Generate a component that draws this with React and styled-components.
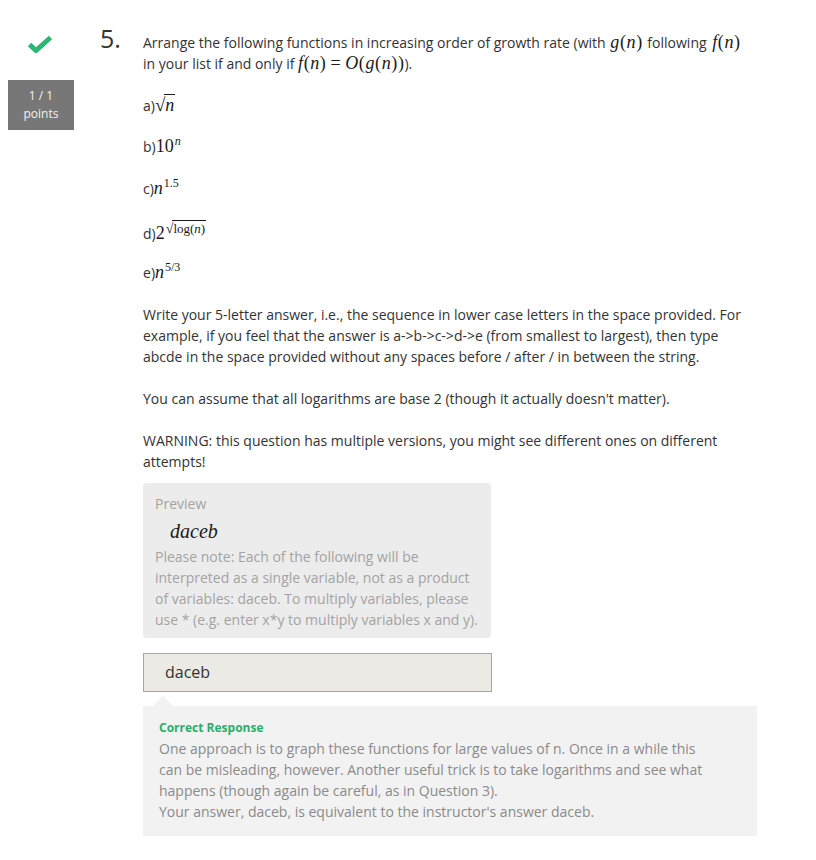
import React from 'react';
import styled, { createGlobalStyle } from 'styled-components';

const Global = createGlobalStyle`
  html, body { margin: 0; padding: 0; background: #fff; }
  body { font-family: "Open Sans", sans-serif; color: #333; -webkit-font-smoothing: antialiased; }
`;

const Page = styled.div`
  width: 816px;
  min-height: 860px;
  box-sizing: border-box;
  padding-top: 32px;
  display: flex;
  align-items: flex-start;
`;

const Side = styled.div`
  margin-left: 8px;
  width: 66px;
  display: flex;
  flex-direction: column;
  align-items: center;
`;

const Check = styled.svg`
  margin-top: 3px;
  width: 26px;
  height: 18px;
  margin-right: 2px;
`;

const Points = styled.div`
  margin-top: 27px;
  width: 66px;
  height: 50px;
  box-sizing: border-box;
  padding-top: 7px;
  background: #777;
  color: #f2f2f2;
  font-size: 12px;
  line-height: 18px;
  text-align: center;
`;

const Num = styled.div`
  width: 69px;
  box-sizing: border-box;
  padding-left: 26px;
  margin-top: -4px;
  font-size: 25px;
  line-height: 21px;
  color: #333;
  font-weight: 400;
`;

const Content = styled.div`
  width: 614px;
  font-size: 14px;
  line-height: 21px;
  color: #333;
`;

const P = styled.p`
  margin: 0 0 ${p => p.$mb ?? 21}px;
`;

const ItemRow = styled.div`
  height: 21px;
  line-height: 21px;
  margin-bottom: 21px;
  white-space: nowrap;
`;

const Math = styled.span`
  font-family: "Liberation Serif", "DejaVu Serif", serif;
  font-size: ${p => p.$size || 18}px;
  letter-spacing: ${p => p.$ls ?? 0}px;
  margin: 0 ${p => p.$mx ?? 0}px;
  color: #1a1a1a;
  white-space: nowrap;
  line-height: 0;
`;

const V = styled.i`
  font-style: italic;
`;

const Op = styled.span`
  margin: 0 ${p => p.$gap ?? 4}px;
`;

const Sup = styled.sup`
  font-size: ${p => p.$size || 12}px;
  line-height: 0;
  vertical-align: ${p => p.$raise || 7}px;
  margin-left: 1px;
`;

const Radical = styled.span`
  font-size: ${p => p.$size || 19}px;
  margin-right: -1px;
`;

const Radicand = styled.span`
  display: inline-block;
  border-top: 1px solid #1a1a1a;
  line-height: 1;
  padding: 1px 1px 0 1px;
`;

const PreviewBox = styled.div`
  width: 348px;
  box-sizing: border-box;
  margin-top: -10px;
  padding: 10px 12px 8px;
  background: #ececec;
  border-radius: 4px;
  color: #a3a3a3;
  font-size: 14px;
  line-height: 21px;
`;

const PreviewMath = styled.div`
  font-family: "Liberation Serif", "DejaVu Serif", serif;
  font-style: italic;
  font-size: 20px;
  line-height: 29px;
  padding-top: 3px;
  margin-left: 15px;
  color: #1a1a1a;
`;

const Input = styled.div`
  margin-top: 15px;
  width: 349px;
  height: 39px;
  box-sizing: border-box;
  border: 1px solid #a6a6a6;
  background: #ebeae4;
  padding-left: 21px;
  display: flex;
  align-items: center;
  font-size: 16px;
  color: #333;
`;

const Feedback = styled.div`
  position: relative;
  margin-top: 14px;
  width: 614px;
  box-sizing: border-box;
  padding: 11px 16px 14px;
  background: #f2f2f2;
  color: #8a8a8a;
  font-size: 14px;
  line-height: 21px;

  &::before {
    content: "";
    position: absolute;
    top: -10px;
    left: 10px;
    border-left: 10px solid transparent;
    border-right: 10px solid transparent;
    border-bottom: 10px solid #f2f2f2;
  }
`;

const FeedbackTitle = styled.div`
  font-size: 12px;
  font-weight: 700;
  color: #2aae6c;
`;

const Item = ({ label, children }) => (
  <ItemRow>
    {label}){children}
  </ItemRow>
);

export default function App() {
  return (
    <>
      <Global />
      <Page>
        <Side>
          <Check viewBox="0 0 26 18">
            <path d="M2.5 9.5 L9 15.5 L23.5 2.5" fill="none" stroke="#2bb673" strokeWidth="5" strokeLinejoin="miter" strokeLinecap="butt" />
          </Check>
          <Points>
            1 / 1
            <br />
            points
          </Points>
        </Side>
        <Num>5.</Num>
        <Content>
          <P $mb={20}>
            Arrange the following functions in increasing order of growth rate (with{' '}
            <Math $ls={0.6} $mx={1}><V>g</V>(<V>n</V>)</Math> following{' '}
            <Math $ls={0.6} $mx={2}><V>f</V>(<V>n</V>)</Math> in your list if and only if{' '}
            <Math $ls={0.6}>
              <V>f</V>(<V>n</V>)<Op>=</Op><V>O</V>(<V>g</V>(<V>n</V>))
            </Math>
            ).
          </P>
          <Item label="a">
            <Math>
              <Radical>√</Radical>
              <Radicand><V>n</V></Radicand>
            </Math>
          </Item>
          <Item label="b">
            <Math>
              10<Sup><V>n</V></Sup>
            </Math>
          </Item>
          <Item label="c">
            <Math>
              <V>n</V><Sup>1.5</Sup>
            </Math>
          </Item>
          <Item label="d">
            <Math>
              2<Sup $raise={6} $size={13}>
                <Radical $size={14}>√</Radical>
                <Radicand>log(<V>n</V>)</Radicand>
              </Sup>
            </Math>
          </Item>
          <Item label="e">
            <Math>
              <V>n</V><Sup>5/3</Sup>
            </Math>
          </Item>
          <P>
            Write your 5-letter answer, i.e., the sequence in lower case letters in the space provided. For
            example, if you feel that the answer is a-&gt;b-&gt;c-&gt;d-&gt;e (from smallest to largest), then type
            abcde in the space provided without any spaces before / after / in between the string.
          </P>
          <P>You can assume that all logarithms are base 2 (though it actually doesn't matter).</P>
          <P>
            WARNING: this question has multiple versions, you might see different ones on different
            attempts!
          </P>
          <PreviewBox>
            Preview
            <PreviewMath>daceb</PreviewMath>
            Please note: Each of the following will be interpreted as a single variable, not as a product
            of variables: daceb. To multiply variables, please use * (e.g. enter x*y to multiply variables x and y).
          </PreviewBox>
          <Input>daceb</Input>
          <Feedback>
            <FeedbackTitle>Correct Response</FeedbackTitle>
            One approach is to graph these functions for large values of n. Once in a while this
            <br />
            can be misleading, however. Another useful trick is to take logarithms and see what
            <br />
            happens (though again be careful, as in Question 3).
            <br />
            Your answer, daceb, is equivalent to the instructor's answer daceb.
          </Feedback>
        </Content>
      </Page>
    </>
  );
}
